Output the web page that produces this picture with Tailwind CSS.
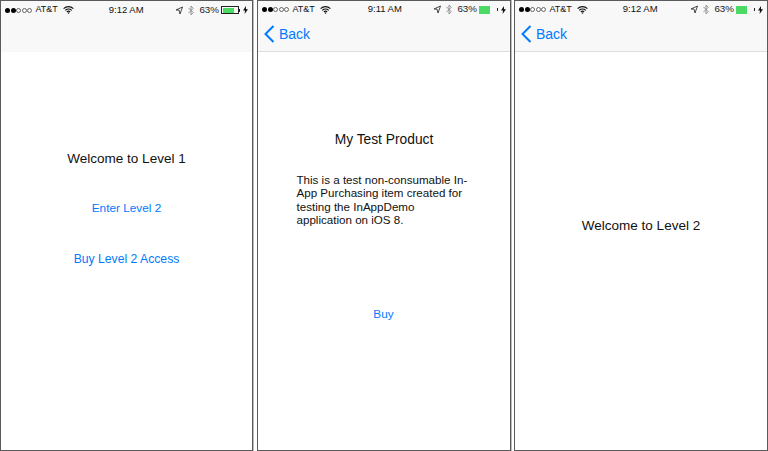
<!DOCTYPE html>
<html lang="en">
<head>
<meta charset="UTF-8">
<title>InAppDemo</title>
<script src="https://cdn.jsdelivr.net/npm/@tailwindcss/browser@4"></script>
</head>
<body class="bg-white font-['Liberation_Sans',sans-serif]">
<main class="flex w-[768px] h-[451px] text-[#111]">

  <!-- Level 1 -->
  <section class="w-[253px] h-[451px] border border-[#5a5a5a] shadow-[1px_0_0_#bbb] flex flex-col">
    <div class="h-[51px] bg-[#f8f8f8] shrink-0">
      <div class="h-[18px] flex items-center pl-[4px] pr-[4px] text-[9px] whitespace-nowrap">
        <span class="flex items-center gap-[0.6px]">
          <i class="w-[5px] h-[5px] rounded-full bg-black"></i><i class="w-[5px] h-[5px] rounded-full bg-black"></i><i class="w-[5px] h-[5px] rounded-full border-[0.5px] border-[#666]"></i><i class="w-[5px] h-[5px] rounded-full border-[0.5px] border-[#666]"></i><i class="w-[5px] h-[5px] rounded-full border-[0.5px] border-[#666]"></i>
        </span>
        <span class="ml-[3px]">AT&amp;T</span>
        <svg class="ml-[5px]" width="11" height="8" viewBox="0 0 11 8" fill="none" stroke="#111" stroke-width="1.1"><path d="M.6 2.6C3.4 0 7.6 0 10.4 2.6M2.2 4.3C4 2.7 7 2.7 8.8 4.3M3.8 5.9C4.7 5.1 6.3 5.1 7.2 5.9"/><path d="M5.5 8 4.4 6.8C5 6.3 6 6.3 6.6 6.8Z" fill="#111" stroke="none"/></svg>
        <span class="ml-[35px] text-[9.5px] font-medium">9:12 AM</span>
        <span class="ml-auto flex items-center">
          <svg width="8" height="9" viewBox="0 0 8 9" fill="none" stroke="#333" stroke-width=".9"><path d="M7.5 1 1 4h3l1 4Z"/></svg>
          <svg class="ml-[5px]" width="6" height="11" viewBox="0 0 6 11" fill="none" stroke="#888" stroke-width=".9"><path d="M.4 2.8 5.2 7.6 3 10V1l2.2 2.4L.4 8.2"/></svg>
          <span class="ml-[5px] text-[9.8px] text-[#222]">63%</span>
          <span class="ml-[2px] w-[18px] h-[8px] border-[0.5px] border-[#222] p-[0.5px] flex"><i class="w-[11px] bg-[#4cd964]"></i></span>
          <i class="w-[1px] h-[3px] bg-[#222]"></i>
          <svg class="ml-[3px]" width="5" height="8" viewBox="0 0 5 8" fill="#111"><path d="M3 0 0 4.6h2L1.6 8 5 3.2H3Z"/></svg>
        </span>
      </div>
    </div>
    <div class="flex flex-col items-center pt-[99px]">
      <p class="text-[13.5px] leading-[16px]">Welcome to Level 1</p>
      <p class="mt-[34px] text-[11.8px] leading-[14px] text-[#007aff]">Enter Level 2</p>
      <p class="mt-[37px] text-[12.2px] leading-[14px] text-[#007aff]">Buy Level 2 Access</p>
    </div>
  </section>

  <!-- Product -->
  <section class="ml-[4px] w-[254px] h-[451px] border border-[#5a5a5a] shadow-[1px_0_0_#bbb] flex flex-col">
    <div class="h-[51px] bg-[#f8f8f8] border-b border-[#ddd] shrink-0">
      <div class="h-[17px] flex items-center pl-[4px] pr-[4px] text-[9px] whitespace-nowrap">
        <span class="flex items-center gap-[0.6px]">
          <i class="w-[5px] h-[5px] rounded-full bg-black"></i><i class="w-[5px] h-[5px] rounded-full bg-black"></i><i class="w-[5px] h-[5px] rounded-full border-[0.5px] border-[#666]"></i><i class="w-[5px] h-[5px] rounded-full border-[0.5px] border-[#666]"></i><i class="w-[5px] h-[5px] rounded-full border-[0.5px] border-[#666]"></i>
        </span>
        <span class="ml-[3px]">AT&amp;T</span>
        <svg class="ml-[5px]" width="11" height="8" viewBox="0 0 11 8" fill="none" stroke="#111" stroke-width="1.1"><path d="M.6 2.6C3.4 0 7.6 0 10.4 2.6M2.2 4.3C4 2.7 7 2.7 8.8 4.3M3.8 5.9C4.7 5.1 6.3 5.1 7.2 5.9"/><path d="M5.5 8 4.4 6.8C5 6.3 6 6.3 6.6 6.8Z" fill="#111" stroke="none"/></svg>
        <span class="ml-[37px] text-[9.5px] font-medium">9:11 AM</span>
        <span class="ml-auto flex items-center">
          <svg width="8" height="9" viewBox="0 0 8 9" fill="none" stroke="#333" stroke-width=".9"><path d="M7.5 1 1 4h3l1 4Z"/></svg>
          <svg class="ml-[5px]" width="6" height="11" viewBox="0 0 6 11" fill="none" stroke="#888" stroke-width=".9"><path d="M.4 2.8 5.2 7.6 3 10V1l2.2 2.4L.4 8.2"/></svg>
          <span class="ml-[5px] text-[9.8px] text-[#222]">63%</span>
          <span class="ml-[2px] w-[18px] h-[8px] flex"><i class="w-[11px] bg-[#4cd964]"></i></span>
          <i class="w-[1px] h-[3px] bg-[#222]"></i>
          <svg class="ml-[3px]" width="5" height="8" viewBox="0 0 5 8" fill="#111"><path d="M3 0 0 4.6h2L1.6 8 5 3.2H3Z"/></svg>
        </span>
      </div>
      <div class="flex items-center h-[32px] pl-[6px] text-[#007aff] text-[14px]">
        <svg width="11" height="18" viewBox="0 0 11 18" fill="none" stroke="#007aff" stroke-width="2"><path d="M9.5 1 1.5 9l8 8"/></svg>
        <span class="ml-[4px]">Back</span>
      </div>
    </div>
    <div class="flex flex-col items-center pt-[80px]">
      <p class="text-[13.8px] leading-[16px]">My Test Product</p>
      <p class="mt-[25px] w-[174px] -ml-[1px] text-[11.6px] leading-[13.4px]">This is a test non-consumable In-App Purchasing item created for testing the InAppDemo application on iOS 8.</p>
      <p class="mt-[80px] -ml-[1px] text-[11.8px] leading-[14px] text-[#007aff]">Buy</p>
    </div>
  </section>

  <!-- Level 2 -->
  <section class="ml-[3px] w-[254px] h-[451px] border border-[#5a5a5a] flex flex-col">
    <div class="h-[51px] bg-[#f8f8f8] border-b border-[#ddd] shrink-0">
      <div class="h-[17px] flex items-center pl-[4px] pr-[4px] text-[9px] whitespace-nowrap">
        <span class="flex items-center gap-[0.6px]">
          <i class="w-[5px] h-[5px] rounded-full bg-black"></i><i class="w-[5px] h-[5px] rounded-full bg-black"></i><i class="w-[5px] h-[5px] rounded-full border-[0.5px] border-[#666]"></i><i class="w-[5px] h-[5px] rounded-full border-[0.5px] border-[#666]"></i><i class="w-[5px] h-[5px] rounded-full border-[0.5px] border-[#666]"></i>
        </span>
        <span class="ml-[3px]">AT&amp;T</span>
        <svg class="ml-[5px]" width="11" height="8" viewBox="0 0 11 8" fill="none" stroke="#111" stroke-width="1.1"><path d="M.6 2.6C3.4 0 7.6 0 10.4 2.6M2.2 4.3C4 2.7 7 2.7 8.8 4.3M3.8 5.9C4.7 5.1 6.3 5.1 7.2 5.9"/><path d="M5.5 8 4.4 6.8C5 6.3 6 6.3 6.6 6.8Z" fill="#111" stroke="none"/></svg>
        <span class="ml-[35px] text-[9.5px] font-medium">9:12 AM</span>
        <span class="ml-auto flex items-center">
          <svg width="8" height="9" viewBox="0 0 8 9" fill="none" stroke="#333" stroke-width=".9"><path d="M7.5 1 1 4h3l1 4Z"/></svg>
          <svg class="ml-[5px]" width="6" height="11" viewBox="0 0 6 11" fill="none" stroke="#888" stroke-width=".9"><path d="M.4 2.8 5.2 7.6 3 10V1l2.2 2.4L.4 8.2"/></svg>
          <span class="ml-[5px] text-[9.8px] text-[#222]">63%</span>
          <span class="ml-[2px] w-[18px] h-[8px] flex"><i class="w-[11px] bg-[#4cd964]"></i></span>
          <i class="w-[1px] h-[3px] bg-[#222]"></i>
          <svg class="ml-[3px]" width="5" height="8" viewBox="0 0 5 8" fill="#111"><path d="M3 0 0 4.6h2L1.6 8 5 3.2H3Z"/></svg>
        </span>
      </div>
      <div class="flex items-center h-[32px] pl-[6px] text-[#007aff] text-[14px]">
        <svg width="11" height="18" viewBox="0 0 11 18" fill="none" stroke="#007aff" stroke-width="2"><path d="M9.5 1 1.5 9l8 8"/></svg>
        <span class="ml-[4px]">Back</span>
      </div>
    </div>
    <div class="flex flex-col items-center pt-[166px]">
      <p class="text-[13.5px] leading-[16px]">Welcome to Level 2</p>
    </div>
  </section>
</main>
</body>
</html>
